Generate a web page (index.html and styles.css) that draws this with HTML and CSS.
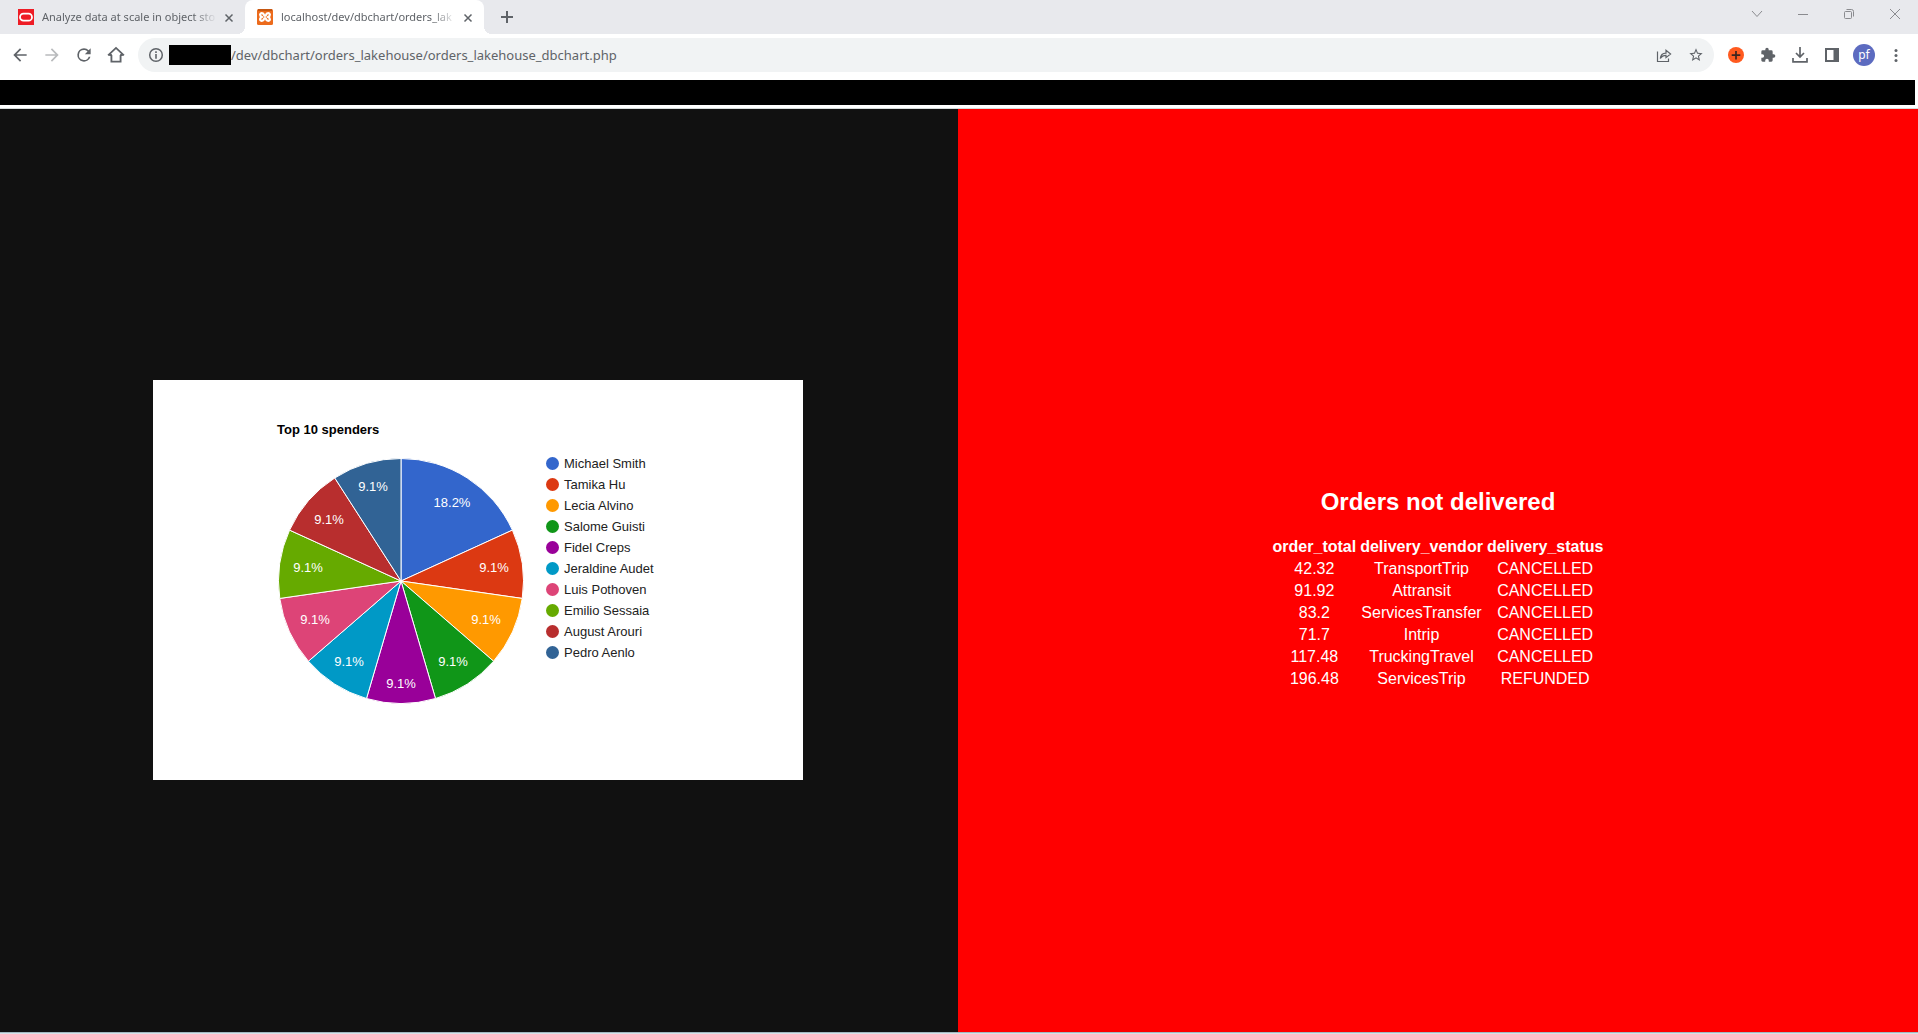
FILE: index.html
```html
<!DOCTYPE html>
<html lang="en">
<head>
<meta charset="utf-8">
<title>localhost/dev/dbchart/orders_lakehouse</title>
<link rel="stylesheet" href="styles.css">
</head>
<body>
<header class="browser">
  <div class="tab-strip">
    <div class="tab">
      <button class="tab-label" type="button">
        <svg class="favicon" viewBox="0 0 16 16" aria-hidden="true"><path fill="#ee1c25" d="M0 0h16v16H0z"/><rect x="2" y="4.700" width="12" height="7" rx="3.500" fill="none" stroke="#fff" stroke-width="1.800"/></svg>
        <span class="tab-title">Analyze data at scale in object sto</span>
      </button>
      <button class="tab-close" type="button" aria-label="Close tab"><svg viewBox="0 0 16 16"><path d="M4.500 5.500l7 7m0-7l-7 7"/></svg></button>
    </div>
    <div class="tab tab-active">
      <button class="tab-label" type="button">
        <svg class="favicon" viewBox="0 0 16 16" aria-hidden="true"><rect width="16" height="16" rx="1.500" fill="#ec6b1c"/><path d="M1 1h14" stroke="#b9500f" stroke-width="1.500"/><path fill="none" stroke="#fff" stroke-width="2.200" stroke-linejoin="round" d="M5.200 8C3.800 7.600 3.100 6.800 3.100 5.700c0-2 3.400-2.200 3.900.3 .3 1.100 1.700 1.100 2 0 .5-2.500 3.900-2.300 3.900-.3 0 1.100-.7 1.900-2.100 2.300 1.400.4 2.100 1.200 2.100 2.300 0 2-3.400 2.200-3.900-.3-.3-1.100-1.700-1.100-2 0-.5 2.500-3.900 2.300-3.900.3 0-1.100.7-1.900 2.100-2.300z"/></svg>
        <span class="tab-title">localhost/dev/dbchart/orders_lak</span>
      </button>
      <button class="tab-close" type="button" aria-label="Close tab"><svg viewBox="0 0 16 16"><path d="M4.500 5.500l7 7m0-7l-7 7"/></svg></button>
    </div>
    <button class="new-tab" type="button" aria-label="New tab"><svg viewBox="0 0 16 16"><path d="M8 2v12M2 8h12"/></svg></button>
    <div class="window-controls">
      <button type="button" aria-label="Search tabs"><svg viewBox="0 0 12 12"><path d="M1 3l5 5.500L11 3"/></svg></button>
      <button type="button" aria-label="Minimize"><svg viewBox="0 0 12 12"><path d="M1 6.500h10"/></svg></button>
      <button type="button" aria-label="Restore"><svg viewBox="0 0 12 12"><rect x="1.500" y="3.500" width="7" height="7" rx="1"/><path d="M3.500 1.500h5a2 2 0 0 1 2 2v5"/></svg></button>
      <button type="button" aria-label="Close window"><svg viewBox="0 0 12 12"><path d="M1 1l10 10M11 1L1 11"/></svg></button>
    </div>
  </div>
  <div class="toolbar">
    <nav class="nav-buttons" aria-label="Browser navigation">
      <button class="tool" type="button" aria-label="Back"><svg viewBox="0 0 24 24"><path d="M20 11H7.830l5.590-5.590L12 4l-8 8 8 8 1.410-1.410L7.830 13H20z"/></svg></button>
      <button class="tool tool-off" type="button" aria-label="Forward"><svg viewBox="0 0 24 24"><path d="M12 4l-1.410 1.410L16.170 11H4v2h12.170l-5.580 5.590L12 20l8-8z"/></svg></button>
      <button class="tool" type="button" aria-label="Reload"><svg viewBox="0 0 24 24"><path d="M17.650 6.350A7.960 7.960 0 0 0 12 4a8 8 0 1 0 7.730 10h-2.080A6 6 0 1 1 12 6c1.660 0 3.140.690 4.220 1.780L13 11h7V4z"/></svg></button>
      <button class="tool" type="button" aria-label="Home"><svg viewBox="0 0 24 24"><path fill="none" stroke="currentColor" stroke-width="2.200" d="M6.500 12v8h11v-8M2.500 12.500L12 3.500l9.500 9M4 12h3m10 0h3"/></svg></button>
    </nav>
    <div class="address-bar">
      <button class="site-info" type="button" aria-label="Site information"><svg viewBox="0 0 16 16"><circle cx="8" cy="8" r="6.300" fill="none" stroke="currentColor" stroke-width="1.500"/><path d="M7.200 4.300h1.600v1.600H7.200zM7.200 7h1.600v4.700H7.200z"/></svg></button>
      <span class="redacted-host"></span>
      <input class="url" type="text" aria-label="Address" value="/dev/dbchart/orders_lakehouse/orders_lakehouse_dbchart.php">
      <button class="tool" type="button" aria-label="Share"><svg viewBox="0 0 16 16"><path fill="none" stroke="currentColor" stroke-width="1.200" d="M1.500 4.500v10h11V11.500M4.300 11.500c.3-3.500 2.400-5.300 5.700-5.400V3.200L14.600 7 10 10.600V8.300c-2.500 0-4.300.8-5.700 3.200z"/></svg></button>
      <button class="tool" type="button" aria-label="Bookmark"><svg viewBox="0 0 24 24"><path d="M22 9.240l-7.190-.620L12 2 9.190 8.630 2 9.240l5.460 4.730L5.820 21 12 17.270 18.180 21l-1.630-7.030zM12 15.400l-3.760 2.270 1-4.280-3.320-2.880 4.380-.380L12 6.100l1.710 4.040 4.380.380-3.320 2.880 1 4.280z"/></svg></button>
    </div>
    <div class="actions">
      <button class="tool" type="button" aria-label="Extension"><svg viewBox="0 0 16 16"><circle cx="8" cy="8" r="8" fill="#ff5a1f"/><path d="M8 4v8.500M3.700 8.200h8.600" stroke="#3b2520" stroke-width="1.700"/></svg></button>
      <button class="tool" type="button" aria-label="Extensions"><svg viewBox="0 0 24 24"><path d="M20.500 11H19V7a2 2 0 0 0-2-2h-4V3.500a2.500 2.500 0 0 0-5 0V5H4a2 2 0 0 0-2 2v3.800h1.500a2.700 2.700 0 0 1 0 5.400H2V20c0 1.100.9 2 2 2h3.800v-1.500a2.700 2.700 0 0 1 5.400 0V22H17a2 2 0 0 0 2-2v-4h1.500a2.500 2.500 0 0 0 0-5z"/></svg></button>
      <button class="tool" type="button" aria-label="Downloads"><svg viewBox="0 0 16 16"><path fill="none" stroke="currentColor" stroke-width="1.700" d="M8 0v9.500M4 6l4 4 4-4M1 11v3.900h14V11"/></svg></button>
      <button class="tool" type="button" aria-label="Side panel"><svg viewBox="0 0 16 16"><path fill-rule="evenodd" d="M1 1h14v14H1zM3 3v10h6.500V3z"/></svg></button>
      <button class="tool" type="button" aria-label="Profile"><span class="avatar">pf</span></button>
      <button class="tool" type="button" aria-label="Menu"><svg viewBox="0 0 16 16"><circle cx="8" cy="3.500" r="1.500"/><circle cx="8" cy="8.500" r="1.500"/><circle cx="8" cy="13.500" r="1.500"/></svg></button>
    </div>
  </div>
  <div class="bookmarks-redacted"></div>
</header>
<main class="dashboard">
  <section class="panel panel-spenders">
    <figure class="chart">
      <figcaption class="chart-title">Top 10 spenders</figcaption>
      <div class="chart-body">
        <svg class="pie" viewBox="0 0 248 256" role="img" aria-label="Share of spending by customer">
          <g stroke="#fff" stroke-width="1">
            <path fill="#3366cc" d="M124 128V5.500A122.500 122.500 0 0 1 235.430 77.110z"/>
            <path fill="#dc3912" d="M124 128L235.430 77.110A122.500 122.500 0 0 1 245.250 145.430z"/>
            <path fill="#ff9900" d="M124 128L245.250 145.430A122.500 122.500 0 0 1 216.580 208.220z"/>
            <path fill="#109618" d="M124 128L216.580 208.220A122.500 122.500 0 0 1 158.510 245.540z"/>
            <path fill="#990099" d="M124 128L158.510 245.540A122.500 122.500 0 0 1 89.490 245.540z"/>
            <path fill="#0099c6" d="M124 128L89.490 245.540A122.500 122.500 0 0 1 31.420 208.220z"/>
            <path fill="#dd4477" d="M124 128L31.420 208.220A122.500 122.500 0 0 1 2.750 145.430z"/>
            <path fill="#66aa00" d="M124 128L2.750 145.430A122.500 122.500 0 0 1 12.570 77.110z"/>
            <path fill="#b82e2e" d="M124 128L12.570 77.110A122.500 122.500 0 0 1 57.770 24.940z"/>
            <path fill="#316395" d="M124 128L57.770 24.940A122.500 122.500 0 0 1 124 5.500z"/>
          </g>
          <g class="pie-labels">
            <text x="175" y="54">18.2%</text>
            <text x="217" y="119">9.1%</text>
            <text x="209" y="171">9.1%</text>
            <text x="176" y="213">9.1%</text>
            <text x="124" y="235">9.1%</text>
            <text x="72" y="213">9.1%</text>
            <text x="38" y="171">9.1%</text>
            <text x="31" y="119">9.1%</text>
            <text x="52" y="71">9.1%</text>
            <text x="96" y="38">9.1%</text>
          </g>
        </svg>
        <ul class="legend">
          <li class="c1">Michael Smith</li>
          <li class="c2">Tamika Hu</li>
          <li class="c3">Lecia Alvino</li>
          <li class="c4">Salome Guisti</li>
          <li class="c5">Fidel Creps</li>
          <li class="c6">Jeraldine Audet</li>
          <li class="c7">Luis Pothoven</li>
          <li class="c8">Emilio Sessaia</li>
          <li class="c9">August Arouri</li>
          <li class="c10">Pedro Aenlo</li>
        </ul>
      </div>
    </figure>
  </section>
  <section class="panel panel-orders">
    <h2>Orders not delivered</h2>
    <table>
      <thead><tr><th>order_total</th><th>delivery_vendor</th><th>delivery_status</th></tr></thead>
      <tbody>
        <tr><td>42.32</td><td>TransportTrip</td><td>CANCELLED</td></tr>
        <tr><td>91.92</td><td>Attransit</td><td>CANCELLED</td></tr>
        <tr><td>83.2</td><td>ServicesTransfer</td><td>CANCELLED</td></tr>
        <tr><td>71.7</td><td>Intrip</td><td>CANCELLED</td></tr>
        <tr><td>117.48</td><td>TruckingTravel</td><td>CANCELLED</td></tr>
        <tr><td>196.48</td><td>ServicesTrip</td><td>REFUNDED</td></tr>
      </tbody>
    </table>
  </section>
</main>
</body>
</html>
```
FILE: styles.css
```css
* { box-sizing: border-box; }

body {
  margin: 0;
  min-height: 100vh;
  display: flex;
  flex-direction: column;
  border-bottom: 1px solid #d8e2e8;
  background: #fff;
  font-family: "Liberation Sans", Arial, sans-serif;
}

button {
  display: flex;
  align-items: center;
  justify-content: center;
  padding: 0;
  border: 0;
  background: none;
  color: #5f6368;
  font: inherit;
}

/* Browser frame */
.browser {
  border-bottom: 1px solid #d5dbdb;
  padding-bottom: 3px;
  font-family: "Noto Sans", "Open Sans", sans-serif;
}

.tab-strip {
  display: flex;
  height: 34px;
  padding-left: 6px;
  background: #e8e9ed;
}

.tab {
  position: relative;
  display: flex;
  align-items: center;
  gap: 4px;
  width: 239px;
  padding: 0 8px 0 12px;
}

.tab-active {
  background: #fff;
  border-radius: 8px 8px 0 0;
}

.tab-active::before,
.tab-active::after {
  content: "";
  position: absolute;
  bottom: 0;
  width: 8px;
  height: 8px;
}

.tab-active::before {
  right: 100%;
  background: radial-gradient(circle at 0 0, #e8e9ed 8px, #fff 8px);
}

.tab-active::after {
  left: 100%;
  background: radial-gradient(circle at 100% 0, #e8e9ed 8px, #fff 8px);
}

.tab-label {
  flex: 1;
  min-width: 0;
  gap: 8px;
}

.favicon {
  flex: none;
  width: 16px;
  height: 16px;
}

.tab-title {
  flex: 1;
  overflow: hidden;
  font-size: 11px;
  line-height: 16px;
  text-align: left;
  white-space: nowrap;
  mask-image: linear-gradient(to left, transparent, #000 24px);
}

.tab-close svg {
  width: 16px;
  height: 16px;
  fill: none;
  stroke: #5f6368;
  stroke-width: 1.5px;
}

.new-tab {
  width: 46px;
}

.new-tab svg {
  width: 16px;
  height: 16px;
  fill: none;
  stroke: #5f6368;
  stroke-width: 2px;
}

.window-controls {
  display: flex;
  height: 28px;
  margin-left: auto;
}

.window-controls button {
  width: 46px;
}

.window-controls svg {
  width: 12px;
  height: 12px;
  fill: none;
  stroke: #8a8b8f;
  stroke-width: 1px;
}

.toolbar {
  display: flex;
  align-items: center;
  gap: 6px;
  height: 46px;
  padding: 0 6px 4px 4px;
}

.nav-buttons,
.actions {
  display: flex;
}

.tool {
  width: 32px;
  height: 34px;
}

.tool svg {
  width: 16px;
  height: 16px;
  fill: currentColor;
}

.nav-buttons svg {
  width: 20px;
  height: 20px;
}

.tool-off { color: #b9bbbd; }

.address-bar {
  display: flex;
  flex: 1;
  align-items: center;
  height: 34px;
  padding: 0 2px 0 5px;
  border-radius: 17px;
  background: #f1f3f4;
}

.site-info {
  width: 26px;
  height: 34px;
}

.site-info svg {
  width: 16px;
  height: 16px;
  fill: currentColor;
}

.redacted-host {
  width: 62px;
  height: 20px;
  background: #000;
}

.url {
  flex: 1;
  min-width: 0;
  padding: 0;
  border: 0;
  background: none;
  color: #5f6368;
  font-family: inherit;
  font-size: 13px;
}

.avatar {
  width: 22px;
  border-radius: 50%;
  background: #5c6bc0;
  color: #fff;
  font-size: 12px;
  line-height: 22px;
}

.bookmarks-redacted {
  height: 25px;
  margin-right: 3px;
  background: #000;
}

/* Dashboard */
.dashboard {
  flex: 1;
  display: grid;
  grid-template-columns: calc(50% - 1px) 1fr;
  border-bottom: 1px solid #a3b8c0;
}

.panel {
  display: flex;
  flex-direction: column;
  align-items: center;
  justify-content: center;
  padding-top: 19px;
  color: #fff;
}

.panel-spenders {
  padding-right: 2px;
  background: #111;
}

.panel-orders { background: #f00; }

.chart {
  width: 650px;
  height: 400px;
  margin: 0;
  padding: 42px 0 0 124px;
  background: #fff;
  color: #222;
  font-size: 13px;
}

.chart-title {
  margin-bottom: 16px;
  color: #000;
  font-weight: bold;
  line-height: 15px;
}

.chart-body {
  display: flex;
  gap: 21px;
}

.pie {
  width: 248px;
  height: 256px;
}

.pie-labels {
  fill: #fff;
  font-size: 13px;
  text-anchor: middle;
}

.legend {
  margin: 0;
  padding: 0;
  list-style: none;
  line-height: 21px;
}

.legend li {
  display: flex;
  align-items: center;
  gap: 5px;
}

.legend li::before {
  content: "";
  width: 13px;
  height: 13px;
  border-radius: 50%;
  background: var(--slice);
}

.c1 { --slice: #3366cc; }
.c2 { --slice: #dc3912; }
.c3 { --slice: #ff9900; }
.c4 { --slice: #109618; }
.c5 { --slice: #990099; }
.c6 { --slice: #0099c6; }
.c7 { --slice: #dd4477; }
.c8 { --slice: #66aa00; }
.c9 { --slice: #b82e2e; }
.c10 { --slice: #316395; }

.panel-orders h2 {
  margin: 19px 0 20px;
  font-size: 24px;
  line-height: 27px;
}

.panel-orders table {
  border-spacing: 2px;
  font-size: 16px;
  line-height: 18px;
  text-align: center;
}

.panel-orders th,
.panel-orders td {
  padding: 1px;
}
```
